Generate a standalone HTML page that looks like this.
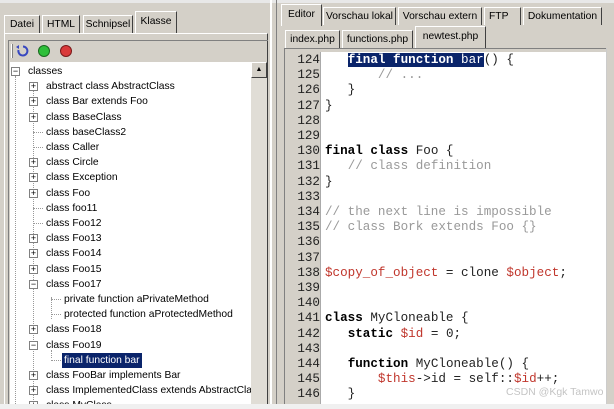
<!DOCTYPE html><html><head><style>
*{margin:0;padding:0;box-sizing:border-box}
body{width:614px;height:409px;overflow:hidden;background:#d4d0c8;font-family:"Liberation Sans",Tahoma,sans-serif;font-size:11px;position:relative}
.a{position:absolute}
.tab{position:absolute;height:18px;line-height:17px;padding:0;text-align:center;overflow:hidden;white-space:nowrap;border-left:1px solid #fff;border-right:1px solid #404040;border-top:1px solid #fff;font-size:10.3px;color:#000}
.tree{position:absolute;left:10px;top:62px;width:241px;height:342px;background:#fff;overflow:hidden}
.r{position:absolute;height:15px;line-height:15px;white-space:nowrap;font-size:10.3px}
.bx{position:absolute;width:9px;height:9px;border:1px solid #808080;background:#fff;font-size:9px;line-height:7px;text-align:center;color:#000}
.code{position:absolute;left:290px;top:52px;width:316px;height:352px;background:#fff;overflow:hidden}
.gut{position:absolute;left:0;top:0;width:30px;height:352px;background:#d4d0c8}
.ln{position:absolute;left:0;width:30px;text-align:right;font-family:"Liberation Mono",monospace;font-size:12.6px;height:15.2px;line-height:15.2px;color:#222}
.cl{position:absolute;left:35px;font-family:"Liberation Mono",monospace;font-size:12.6px;white-space:pre;height:15.2px;line-height:15.2px;color:#222}
b{font-weight:bold;color:#000}.c{color:#999}.v{color:#c0362c}
</style></head><body>
<div class="a" style="left:0;top:0;width:614px;height:3px;background:#e8e8e8"></div>
<div class="tab" style="left:4px;top:15px;width:36px">Datei</div>
<div class="tab" style="left:42px;top:15px;width:38px">HTML</div>
<div class="tab" style="left:83px;top:15px;width:50px">Schnipsel</div>
<div class="tab" style="left:135px;top:11px;width:42px;height:22px;line-height:20px">Klasse</div>
<div class="a" style="left:4px;top:33px;width:264px;height:373px;border-left:1px solid #fff;border-top:1px solid #fff;border-right:1px solid #404040"></div>
<div class="a" style="left:8px;top:40px;width:260px;height:366px;border-left:1px solid #808080;border-top:1px solid #808080"></div>
<div class="a" style="left:11px;top:44px;width:2px;height:14px;border-left:1px solid #fff;border-right:1px solid #808080"></div>
<svg class="a" style="left:14px;top:43px" width="62" height="16"><path d="M9 3.5A4.5 4.5 0 1 1 4.5 7" fill="none" stroke="#3848c0" stroke-width="2"/><path d="M2 4l3-2 0 4z" fill="#3848c0"/><circle cx="30" cy="8" r="5.5" fill="#2fbf3a" stroke="#1a6a1f"/><circle cx="52" cy="8" r="5.5" fill="#d93a3a" stroke="#7a1a1a"/></svg>
<div class="tree">
<div class="a" style="left:5px;top:14px;height:330px;border-left:1px dotted #999"></div>
<div class="a" style="left:23px;top:24px;height:330px;border-left:1px dotted #999"></div>
<div class="a" style="left:41px;top:235px;height:22px;border-left:1px dotted #999"></div>
<div class="a" style="left:41px;top:288px;height:8px;border-left:1px dotted #999"></div>
</div>
<div id="tr" class="a" style="left:10px;top:62px;width:241px;height:342px;overflow:hidden"></div>
<div class="a" style="left:251px;top:62px;width:16px;height:342px;background:#e0ddd6"></div>
<div class="a" style="left:251px;top:62px;width:16px;height:16px;background:#d4d0c8;border:1px solid;border-color:#fff #404040 #404040 #fff;font-size:7px;text-align:center;line-height:13px">▲</div>
<div class="a" style="left:270px;top:0;width:2px;height:409px;background:#fff"></div>
<div class="a" style="left:276px;top:0;width:1px;height:409px;background:#808080"></div>
<div class="tab" style="left:281px;top:4px;width:41px;height:22px;line-height:20px">Editor</div>
<div class="tab" style="left:323px;top:7px;width:73px">Vorschau lokal</div>
<div class="tab" style="left:398px;top:7px;width:84px">Vorschau extern</div>
<div class="tab" style="left:484px;top:7px;width:37px;text-align:left;padding-left:4px">FTP</div>
<div class="tab" style="left:523px;top:7px;width:79px">Dokumentation</div>
<div class="tab" style="left:285px;top:30px;width:55px">index.php</div>
<div class="tab" style="left:342px;top:30px;width:71px">functions.php</div>
<div class="tab" style="left:415px;top:26px;width:71px;height:22px;line-height:20px">newtest.php</div>
<div class="a" style="left:284px;top:48px;width:330px;height:361px;border-left:1px solid #808080;border-top:1px solid #808080"></div>
<div class="code"><div class="gut"></div><div class="a" style="left:30px;top:0;width:1px;height:352px;background:#aaa"></div><div id="cd"></div></div>
<div class="a" style="left:606px;top:48px;width:8px;height:361px;background:#d4d0c8;border-left:1px solid #ccc"></div>
<div class="a" style="left:0;top:404px;width:614px;height:5px;background:#f0f0f0"></div>
<div class="a" style="left:506px;top:386px;color:#c4c4c4;font-size:10.5px">CSDN @Kgk Tamwo</div>
<script>
var T=[[0,'−','classes'],[1,'+','abstract class AbstractClass'],[1,'+','class Bar extends Foo'],[1,'+','class BaseClass'],[1,'','class baseClass2'],[1,'','class Caller'],[1,'+','class Circle'],[1,'+','class Exception'],[1,'+','class Foo'],[1,'','class foo11'],[1,'','class Foo12'],[1,'+','class Foo13'],[1,'+','class Foo14'],[1,'+','class Foo15'],[1,'−','class Foo17'],[2,'','private function aPrivateMethod'],[2,'','protected function aProtectedMethod'],[1,'+','class Foo18'],[1,'−','class Foo19'],[2,'','final function bar',1],[1,'+','class FooBar implements Bar'],[1,'+','class ImplementedClass extends AbstractCla'],[1,'+','class MyClass']];
var h='';T.forEach(function(t,i){var y=2+i*15.2;var x=18+t[0]*18;
if(t[1])h+='<div class="bx" style="left:'+(x-17)+'px;top:'+(y+3)+'px">'+t[1]+'</div>';
else h+='<div class="a" style="left:'+(x-13)+'px;top:'+(y+7)+'px;width:10px;border-top:1px dotted #999"></div>';
h+='<div class="r" style="left:'+x+'px;top:'+y+'px;'+(t[3]?'background:#0a246a;color:#fff;padding:0 2px;margin-left:-2px':'')+'">'+t[2]+'</div>';});
document.getElementById('tr').innerHTML=h;
var C=['   <span style="background:#0a246a;color:#fff"><b style="color:#fff">final function</b> bar</span>() {','       <span class="c">// ...</span>','   }','}','','','<b>final class</b> Foo {','   <span class="c">// class definition</span>','}','','<span class="c">// the next line is impossible</span>','<span class="c">// class Bork extends Foo {}</span>','','','<span class="v">$copy_of_object</span> = clone <span class="v">$object</span>;','','','<b>class</b> MyCloneable {','   <b>static</b> <span class="v">$id</span> = 0;','','   <b>function</b> MyCloneable() {','       <span class="v">$this</span>->id = self::<span class="v">$id</span>++;','   }'];
h='';C.forEach(function(c,i){var y=1+i*15.2;h+='<div class="ln" style="top:'+y+'px">'+(124+i)+'</div><div class="cl" style="top:'+y+'px">'+c+'</div>';});
document.getElementById('cd').innerHTML=h;
</script>
</body></html>
